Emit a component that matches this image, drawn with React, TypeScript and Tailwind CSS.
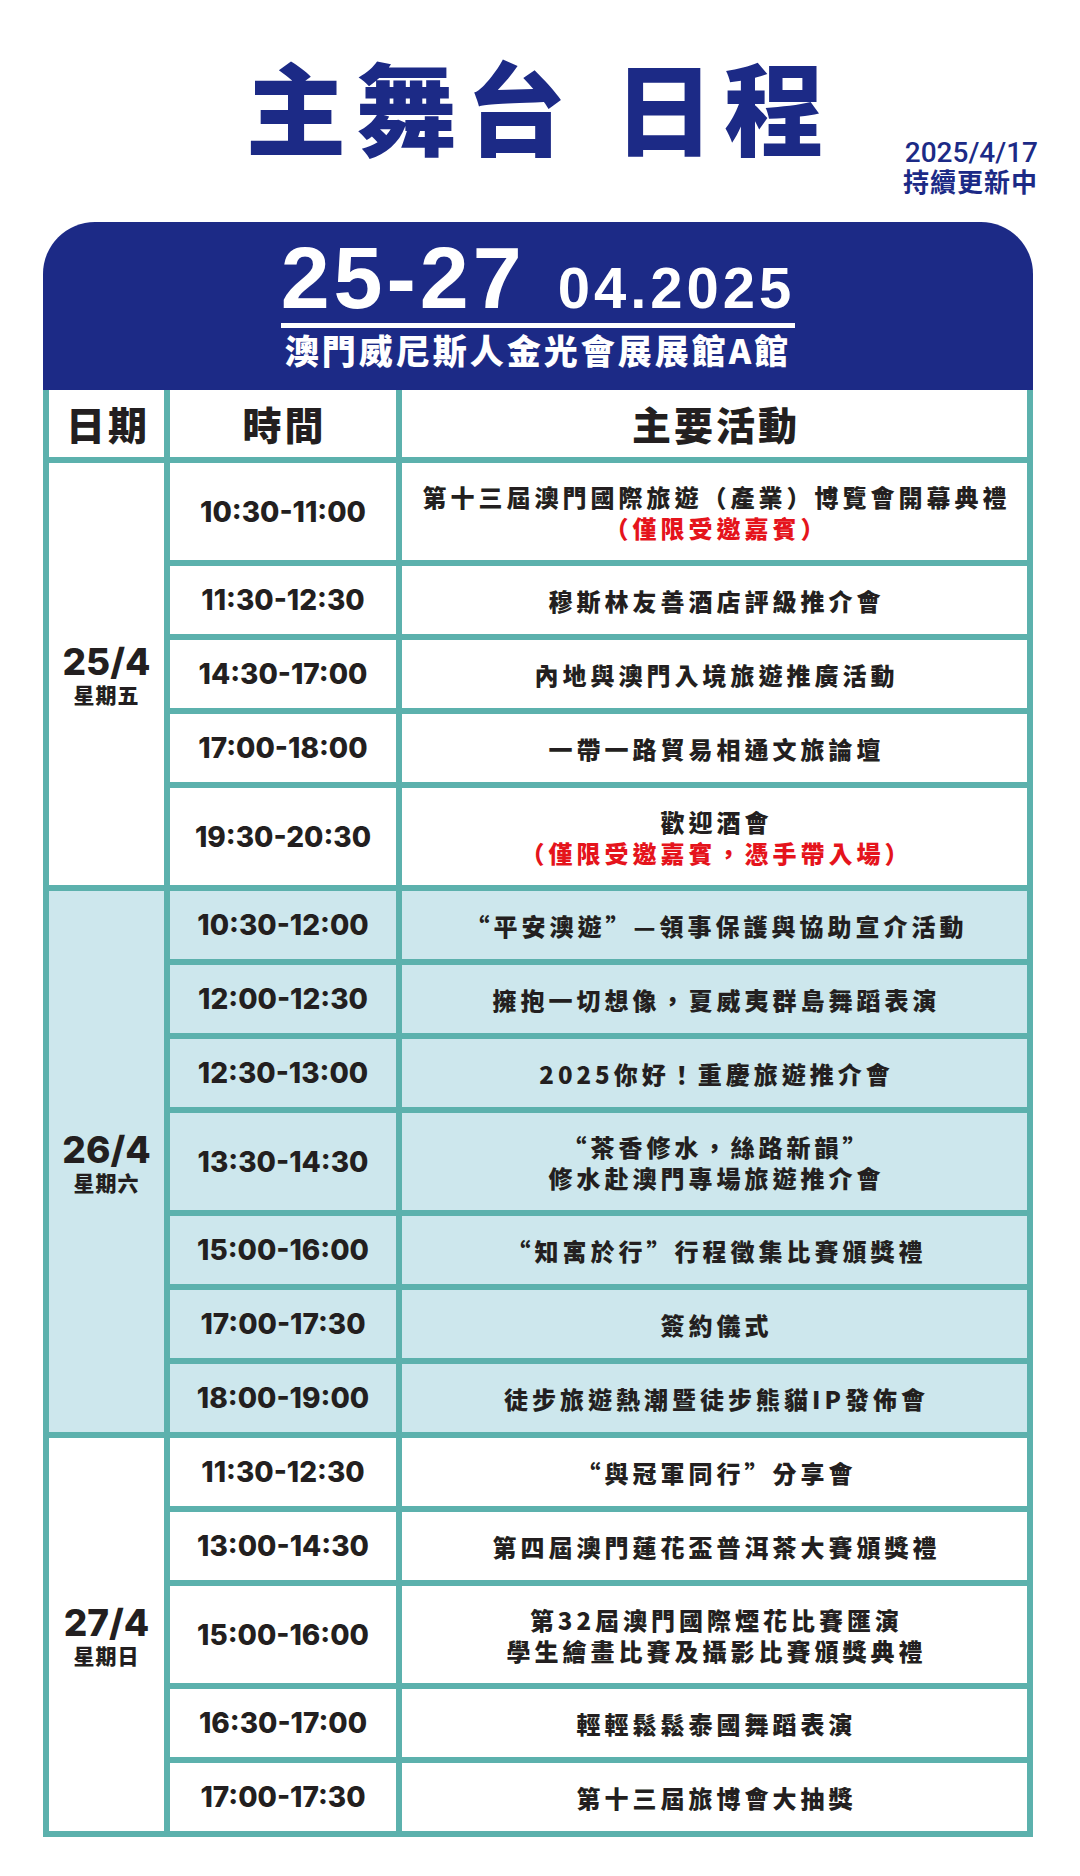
type Row = { time: string; lines: string[]; red?: string }
type Day = { date: string; week: string; bg: string; rows: Row[] }

const days: Day[] = [
  {
    date: "25/4",
    week: "星期五",
    bg: "bg-white",
    rows: [
      { time: "10:30-11:00", lines: ["第十三屆澳門國際旅遊（產業）博覽會開幕典禮"], red: "（僅限受邀嘉賓）" },
      { time: "11:30-12:30", lines: ["穆斯林友善酒店評級推介會"] },
      { time: "14:30-17:00", lines: ["內地與澳門入境旅遊推廣活動"] },
      { time: "17:00-18:00", lines: ["一帶一路貿易相通文旅論壇"] },
      { time: "19:30-20:30", lines: ["歡迎酒會"], red: "（僅限受邀嘉賓，憑手帶入場）" },
    ],
  },
  {
    date: "26/4",
    week: "星期六",
    bg: "bg-[#cde7ed]",
    rows: [
      { time: "10:30-12:00", lines: ["“平安澳遊”—領事保護與協助宣介活動"] },
      { time: "12:00-12:30", lines: ["擁抱一切想像，夏威夷群島舞蹈表演"] },
      { time: "12:30-13:00", lines: ["2025你好！重慶旅遊推介會"] },
      { time: "13:30-14:30", lines: ["“茶香修水，絲路新韻”", "修水赴澳門專場旅遊推介會"] },
      { time: "15:00-16:00", lines: ["“知寓於行”行程徵集比賽頒獎禮"] },
      { time: "17:00-17:30", lines: ["簽約儀式"] },
      { time: "18:00-19:00", lines: ["徒步旅遊熱潮暨徒步熊貓IP發佈會"] },
    ],
  },
  {
    date: "27/4",
    week: "星期日",
    bg: "bg-white",
    rows: [
      { time: "11:30-12:30", lines: ["“與冠軍同行”分享會"] },
      { time: "13:00-14:30", lines: ["第四屆澳門蓮花盃普洱茶大賽頒獎禮"] },
      { time: "15:00-16:00", lines: ["第32屆澳門國際煙花比賽匯演", "學生繪畫比賽及攝影比賽頒獎典禮"] },
      { time: "16:30-17:00", lines: ["輕輕鬆鬆泰國舞蹈表演"] },
      { time: "17:00-17:30", lines: ["第十三屆旅博會大抽獎"] },
    ],
  },
]

function ScheduleRow({ row, bg }: { row: Row; bg: string }) {
  const tall = row.lines.length + (row.red ? 1 : 0) > 1
  return (
    <div className={`grid grid-cols-[226px_1fr] gap-[6px] ${tall ? "h-[97px]" : "h-[68px]"}`}>
      <div className={`${bg} flex items-center justify-center font-['Inter',sans-serif] text-[28px] font-extrabold`}>
        {row.time}
      </div>
      <div className={`${bg} flex flex-col items-center justify-center pl-[4px] text-center text-[24px] leading-[31px] font-black tracking-[4px]`}>
        {row.lines.map((l) => (
          <div key={l}>{l}</div>
        ))}
        {row.red && <div className="text-[#e5141c]">{row.red}</div>}
      </div>
    </div>
  )
}

export default function App() {
  return (
    <div className="min-h-[1876px] w-[1080px] bg-white font-['Noto_Sans_CJK_TC',sans-serif] text-[#231f20]">
      {/* Title */}
      <header className="grid grid-cols-[1fr_auto_1fr] items-start pt-[50px]">
        <div />
        <h1 className="text-[100px] leading-[110px] font-black tracking-[10px] text-[#1c2a86]">
          主舞台<span className="ml-[38px]">日程</span>
        </h1>
        <div className="mt-[89px] justify-self-end pr-[42px] text-right text-[#1c2a86]">
          <div className="font-['Roboto',sans-serif] text-[28px] leading-[28px] font-medium">2025/4/17</div>
          <div className="text-[26px] leading-[28px] font-bold tracking-[1px]">持續更新中</div>
        </div>
      </header>

      {/* Banner */}
      <div className="mt-[27px] ml-[43px] flex w-[990px] flex-col items-center rounded-t-[52px] bg-[#1c2a86] pt-[16px] pb-[23px] text-white">
        <div className="flex flex-col">
          <div className="flex h-[80px] items-baseline font-['Liberation_Sans',sans-serif] font-bold">
            <span className="text-[88px] leading-[80px] tracking-[4px]">25-27</span>
            <span className="ml-[32px] text-[58px] leading-[58px] tracking-[4px]">04.2025</span>
          </div>
          <div className="mt-[5px] h-[5px] w-full bg-white" />
          <div className="mt-[5px] text-center text-[34px] leading-[34px] font-black tracking-[3px]">
            澳門威尼斯人金光會展展館A館
          </div>
        </div>
      </div>

      {/* Table */}
      <div className="ml-[43px] flex w-[990px] flex-col gap-[6px] bg-[#5cb1ad] px-[6px] pb-[6px]">
        <div className="grid h-[67px] grid-cols-[115px_226px_1fr] gap-x-[6px] text-[39px] font-black tracking-[3px]">
          <div className="flex items-center justify-center bg-white pl-[3px]">日期</div>
          <div className="flex items-center justify-center bg-white pl-[3px]">時間</div>
          <div className="flex items-center justify-center bg-white pl-[3px]">主要活動</div>
        </div>

        {days.map((day) => (
          <div key={day.date} className="flex gap-[6px]">
            <div className={`${day.bg} flex w-[115px] shrink-0 flex-col items-center justify-center`}>
              <div className="font-['Inter',sans-serif] text-[37px] leading-[40px] font-extrabold">{day.date}</div>
              <div className="text-[21px] leading-[24px] font-black tracking-[1px]">{day.week}</div>
            </div>
            <div className="flex flex-1 flex-col gap-[6px]">
              {day.rows.map((row) => (
                <ScheduleRow key={row.time} row={row} bg={day.bg} />
              ))}
            </div>
          </div>
        ))}
      </div>
    </div>
  )
}
